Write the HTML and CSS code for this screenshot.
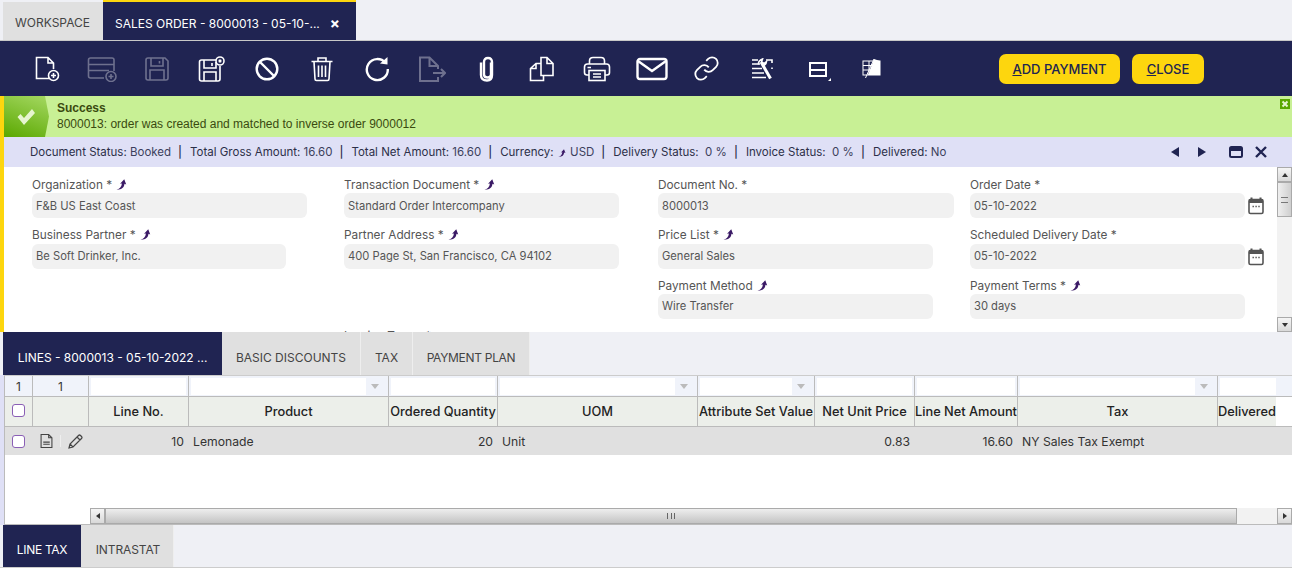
FILE: index.html
```html
<!DOCTYPE html>
<html lang="en">
<head>
<meta charset="utf-8">
<title>Sales Order</title>
<link rel="stylesheet" href="styles.css">
</head>
<body>
<svg class="defs" width="0" height="0" aria-hidden="true">
  <symbol id="jump" viewBox="0 0 10 10"><path d="M.5 9.800C3 9.500 5 7.500 5.400 4.200L3.700 4.400 7.500.2 9.300 5 7.700 4.400C7.500 7.800 5 10 .5 9.800Z" fill="#3b1a66"/></symbol>
  <symbol id="cal" viewBox="0 0 16 18"><path d="M3.500 0.500v3M12.500 0.500v3" stroke="#555" stroke-width="2" fill="none"/><rect x="1" y="2.500" width="14" height="14" rx="1.500" fill="#fff" stroke="#555" stroke-width="1.600"/><rect x="1" y="2.500" width="14" height="3.500" fill="#555"/><path d="M4.500 9.500h1.400M7.400 9.500h1.400M10.300 9.500h1.400" stroke="#555" stroke-width="1.400"/></symbol>
</svg>

<nav class="main-tabs">
  <div class="main-tab">WORKSPACE</div>
  <div class="main-tab active">SALES ORDER - 8000013 - 05-10-...<span class="tab-close">×</span></div>
</nav>

<header class="toolbar">
  <div class="tools">
    <span class="tool"><svg width="26" height="26" viewBox="0 0 26 26" class="ic"><path d="M15 22.500H2.500V1.500H14L19.500 7V13M14 1.500V7H19.500"/><circle cx="19.500" cy="19.500" r="5"/><path d="M19.500 17v5M17 19.500h5"/></svg></span>
    <span class="tool off"><svg width="30" height="26" viewBox="0 0 30 26" class="ic"><path d="M17 22H3.500Q1.500 22 1.500 20V4Q1.500 2 3.500 2H25Q27 2 27 4V15M1.500 8.500H27M1.500 14.500H22"/><circle cx="24" cy="20.500" r="5"/><path d="M24 18v5M21.500 20.500h5"/></svg></span>
    <span class="tool off"><svg width="26" height="26" viewBox="0 0 26 26" class="ic"><path d="M4 2H21L24 5V22Q24 24 22 24H4Q2 24 2 22V4Q2 2 4 2Z"/><path d="M7 2V10H19V2M15.500 5V7.500M6 24V14H20V24"/></svg></span>
    <span class="tool"><svg width="28" height="26" viewBox="0 0 28 26" class="ic"><path d="M18 4H3.500Q1.500 4 1.500 6V23Q1.500 25 3.500 25H20Q22 25 22 23V10"/><path d="M6 4V12H18V6M14 7V10M6 25V16H18V25"/><circle cx="22" cy="5" r="4"/><path d="M20.800 3.800l2.400 2.400M23.200 3.800l-2.400 2.400"/></svg></span>
    <span class="tool"><svg width="24" height="24" viewBox="0 0 24 24" class="ic thick"><circle cx="12" cy="12" r="10.300"/><path d="M5 5L19 19"/></svg></span>
    <span class="tool"><svg width="24" height="26" viewBox="0 0 24 26" class="ic"><path d="M1.500 5.500H22.500M8 5.500V2H16V5.500M4 5.500L5 23Q5 24.500 6.500 24.500H17.500Q19 24.500 19 23L20 5.500M8.500 9.500V21M12 9.500V21M15.500 9.500V21"/></svg></span>
    <span class="tool"><svg width="26" height="26" viewBox="0 0 26 26" class="ic thick"><path d="M21.500 7A10.500 10.500 0 1 0 23.800 13"/><path class="solid" d="M16 7.500L23.500 1V8.500Z"/></svg></span>
    <span class="tool off"><svg width="28" height="26" viewBox="0 0 28 26" class="ic mid"><path d="M20 13V10L11.500 1.500H2V25H20V21M11.500 1.500V10H20M15 17H27M23 13L27 17L23 21"/></svg></span>
    <span class="tool"><svg width="18" height="26" viewBox="0 0 18 26" class="ic thick"><path d="M13 6.500V18.500Q13 21.500 9.500 21.500Q6 21.500 6 18.500V6Q6 2 10 2Q14 2 14 6V19Q14 24.500 9 24.500Q3 24.500 3 19V6.500"/></svg></span>
    <span class="tool"><svg width="26" height="26" viewBox="0 0 26 26" class="ic"><path d="M12 7.500H7L1.500 12.500V24.500H14.500V19M7 7.500V12.500H1.500"/><path d="M12 19.500V1.500H18L24 7.500V19.500ZM18 1.500V7.500H24"/></svg></span>
    <span class="tool"><svg width="28" height="26" viewBox="0 0 28 26" class="ic"><path d="M6.500 8V5Q6.500 1.500 10 1.500H18Q21.500 1.500 21.500 5V8"/><path d="M6 19H4Q1.500 19 1.500 16.500V11Q1.500 8 4.500 8H23.500Q26.500 8 26.500 11V16.500Q26.500 19 24 19H22"/><rect x="6" y="14.500" width="16" height="10"/><path d="M10 18H18M10 21H18M4.500 11.500H8"/></svg></span>
    <span class="tool"><svg width="32" height="24" viewBox="0 0 32 24" class="ic thick"><rect x="1.500" y="2" width="29" height="20" rx="2.500"/><path d="M2 4L16 14L30 4"/></svg></span>
    <span class="tool"><svg width="27" height="27" viewBox="0 0 24 24" class="ic"><path d="M10 13a5 5 0 0 0 7.540.54l3-3a5 5 0 0 0-7.070-7.070l-1.720 1.710"/><path d="M14 11a5 5 0 0 0-7.540-.54l-3 3a5 5 0 0 0 7.070 7.070l1.710-1.710"/></svg></span>
    <span class="tool"><svg width="22" height="22" viewBox="0 0 22 22" class="ic"><path d="M1 2H7M15 2H21V5M1 6H9M1 10.500H11M1 15H13M1 19.500H15M21 9.500V11"/><path class="heavy" d="M10 4L19.500 20.500"/><path d="M7.500 6.500Q7 2.500 11.500 1L10.500 4L13 5.500L15.500 3.500Q15 7.500 11 8"/></svg></span>
    <span class="tool"><span class="layout-ico"><span class="layout-box"><i></i><i></i></span><b></b></span></span>
    <span class="tool"><svg width="20" height="21" viewBox="0 0 20 21" class="ic thin"><rect x="1" y="3" width="17" height="14" fill="none"/><path d="M1 7.500H18M1 12H18M7 3V17"/><path class="solid" d="M12 1L18 3V17H6Z" fill="#ddd"/><path d="M3.500 20L12 1"/></svg></span>
  </div>
  <div class="actions">
    <button class="action wide" type="button"><u>A</u>DD PAYMENT</button>
    <button class="action" type="button"><u>C</u>LOSE</button>
  </div>
</header>

<section class="window">
  <div class="message">
    <div class="msg-icon"><svg width="20" height="18" viewBox="0 0 20 18"><path d="M1.500 9L4.500 6L8 10L16 1L19 5L8 17Z" fill="#e6f5cf"/></svg></div>
    <div class="msg-text"><strong>Success</strong><span>8000013: order was created and matched to inverse order 9000012</span></div>
    <span class="msg-close"><svg width="10" height="10" viewBox="0 0 10 10"><rect width="10" height="10" fill="#5aa800"/><path d="M2.500 2.500L7.500 7.500M7.500 2.500L2.500 7.500" stroke="#e6f5cf" stroke-width="2"/></svg></span>
  </div>

  <div class="status">
    <div class="status-text">
      <span><b>Document Status:</b> Booked</span><em>|</em>
      <span><b>Total Gross Amount:</b> 16.60</span><em>|</em>
      <span><b>Total Net Amount:</b> 16.60</span><em>|</em>
      <span><b>Currency:</b> <svg class="jump" width="8" height="8"><use href="#jump"/></svg> USD</span><em>|</em>
      <span><b>Delivery Status:</b>&nbsp; 0 %</span><em>|</em>
      <span><b>Invoice Status:</b>&nbsp; 0 %</span><em>|</em>
      <span><b>Delivered:</b> No</span>
    </div>
    <div class="status-btns">
      <svg width="10" height="12" viewBox="0 0 10 12"><path d="M9 1V11L1 6Z" fill="#202452"/></svg>
      <svg width="10" height="12" viewBox="0 0 10 12"><path d="M1 1V11L9 6Z" fill="#202452"/></svg>
      <svg class="gap-l" width="14" height="12" viewBox="0 0 14 12"><rect x="1" y="1" width="12" height="10" rx="1.500" fill="none" stroke="#202452" stroke-width="2"/><rect x="1" y="1" width="12" height="4" fill="#202452"/></svg>
      <svg class="gap-s" width="12" height="12" viewBox="0 0 12 12"><path d="M1 1L11 11M11 1L1 11" stroke="#202452" stroke-width="2.400"/></svg>
    </div>
  </div>

  <div class="form-wrap">
    <div class="form">
      <div class="field"><label>Organization * <svg class="jump" width="11" height="11"><use href="#jump"/></svg></label><div class="input w275">F&amp;B US East Coast</div></div>
      <div class="field"><label>Transaction Document * <svg class="jump" width="11" height="11"><use href="#jump"/></svg></label><div class="input w275">Standard Order Intercompany</div></div>
      <div class="field"><label>Document No. *</label><div class="input w296">8000013</div></div>
      <div class="field"><label>Order Date *</label><div class="with-cal"><div class="input w275">05-10-2022</div><svg class="cal" width="16" height="18"><use href="#cal"/></svg></div></div>

      <div class="field second"><label>Business Partner * <svg class="jump" width="11" height="11"><use href="#jump"/></svg></label><div class="input w254">Be Soft Drinker, Inc.</div></div>
      <div class="field second"><label>Partner Address * <svg class="jump" width="11" height="11"><use href="#jump"/></svg></label><div class="input w275">400 Page St, San Francisco, CA 94102</div></div>
      <div class="field second"><label>Price List * <svg class="jump" width="11" height="11"><use href="#jump"/></svg></label><div class="input w275">General Sales</div></div>
      <div class="field second"><label>Scheduled Delivery Date *</label><div class="with-cal"><div class="input w275">05-10-2022</div><svg class="cal" width="16" height="18"><use href="#cal"/></svg></div></div>

      <div class="field"></div>
      <div class="field"></div>
      <div class="field third"><label>Payment Method <svg class="jump" width="11" height="11"><use href="#jump"/></svg></label><div class="input w275">Wire Transfer</div></div>
      <div class="field third"><label>Payment Terms * <svg class="jump" width="11" height="11"><use href="#jump"/></svg></label><div class="input w275">30 days</div></div>

      <div class="field"></div>
      <div class="field"><label>Invoice Terms *</label></div>
    </div>
    <div class="vscroll">
      <span class="sb-btn"><i class="up"></i></span>
      <span class="sb-thumb"><i></i></span>
      <span class="sb-track"></span>
      <span class="sb-btn"><i class="down"></i></span>
    </div>
  </div>
</section>

<nav class="sub-tabs">
  <div class="sub-tab active t219">LINES - 8000013 - 05-10-2022 ...</div>
  <div class="sub-tab t139">BASIC DISCOUNTS</div>
  <div class="sub-tab t52">TAX</div>
  <div class="sub-tab t117">PAYMENT PLAN</div>
</nav>

<section class="grid-outer">
  <div class="grid">
    <div class="row filter">
      <div class="cell num">1</div>
      <div class="cell num">1</div>
      <div class="cell"><span class="box"></span></div>
      <div class="cell"><span class="box"></span><span class="drop"></span></div>
      <div class="cell"><span class="box"></span></div>
      <div class="cell"><span class="box"></span><span class="drop"></span></div>
      <div class="cell"><span class="box"></span><span class="drop"></span></div>
      <div class="cell"><span class="box"></span></div>
      <div class="cell"><span class="box"></span></div>
      <div class="cell"><span class="box"></span><span class="drop"></span></div>
      <div class="cell last"><span class="box"></span></div>
    </div>
    <div class="row head">
      <div class="cell"><span class="check"></span></div>
      <div class="cell"></div>
      <div class="cell">Line No.</div>
      <div class="cell">Product</div>
      <div class="cell">Ordered Quantity</div>
      <div class="cell">UOM</div>
      <div class="cell">Attribute Set Value</div>
      <div class="cell">Net Unit Price</div>
      <div class="cell">Line Net Amount</div>
      <div class="cell">Tax</div>
      <div class="cell last">Delivered</div>
    </div>
    <div class="row data">
      <div class="cell"><span class="check"></span></div>
      <div class="cell icons">
        <svg width="13" height="16" viewBox="0 0 12 14"><path d="M1 1H8L11 4V13H1Z M8 1V4H11" fill="none" stroke="#444" stroke-width="1"/><path d="M3 8H9M3 10H9" stroke="#444" stroke-width="1"/></svg>
        <i class="sep"></i>
        <svg width="15" height="15" viewBox="0 0 15 15"><path d="M1 14L2 10L10.500 1.500Q11.500 .5 12.500 1.500L13.500 2.500Q14.500 3.500 13.500 4.500L5 13ZM9 3L12 6M2 10L5 13" fill="none" stroke="#444" stroke-width="1.200"/></svg>
      </div>
      <div class="cell right">10</div>
      <div class="cell">Lemonade</div>
      <div class="cell right">20</div>
      <div class="cell">Unit</div>
      <div class="cell"></div>
      <div class="cell right">0.83</div>
      <div class="cell right">16.60</div>
      <div class="cell">NY Sales Tax Exempt</div>
      <div class="cell last"></div>
    </div>
    <div class="grid-space"></div>
    <div class="hscroll">
      <span class="sb-btn h"><i class="left"></i></span>
      <span class="h-thumb"><i></i></span>
      <span class="h-track"></span>
      <span class="sb-btn h"><i class="right"></i></span>
    </div>
  </div>
</section>

<nav class="sub-tabs bottom">
  <div class="sub-tab active t78">LINE TAX</div>
  <div class="sub-tab t93">INTRASTAT</div>
</nav>
</body>
</html>
```

FILE: styles.css
```css
* { box-sizing: border-box; }
html, body { height: 100%; }
body {
  margin: 0;
  width: 1292px;
  height: 568px;
  overflow: hidden;
  background: #eff0f5;
  color: #444;
  font-family: Inter, "Liberation Sans", sans-serif;
  font-size: 11px;
}
.defs { display: block; height: 0; }

/* main tabs */
.main-tabs {
  display: flex;
  height: 41px;
  padding-left: 3px;
  border-bottom: 1px solid #c8c8c8;
}
.main-tab {
  display: flex;
  align-items: center;
  width: 100px;
  margin-top: 2px;
  padding: 3px 0 0 12px;
  background: #e0e0e0;
  color: #444;
  font-size: 12px;
  white-space: nowrap;
}
.main-tab.active {
  width: 253px;
  height: 40px;
  margin-top: 0;
  padding-top: 4px;
  border-top: 2px solid #fdd60e;
  background: #202452;
  color: #fff;
}
.tab-close { margin-left: 10px; font-size: 15px; font-weight: 700; }

/* toolbar */
.toolbar {
  display: flex;
  align-items: center;
  height: 55px;
  background: #202452;
  padding-left: 19px;
}
.tools { display: flex; width: 980px; }
.tool {
  display: flex;
  align-items: center;
  justify-content: center;
  width: 55px;
  height: 32px;
}
.tool.off { opacity: .35; }
.ic { fill: none; stroke: #fff; stroke-width: 1.6; }
.ic.thick { stroke-width: 2.4; }
.ic.mid { stroke-width: 2; }
.ic.thin { stroke-width: 1; }
.ic .solid { fill: #fff; stroke: none; }
.ic .heavy { stroke-width: 3; }
.layout-ico { position: relative; display: block; width: 20px; height: 19px; }
.layout-box {
  display: flex;
  flex-direction: column;
  gap: 2px;
  width: 18px;
  height: 15px;
  margin: 3px 0 0 2px;
  border: 2px solid #fff;
  background: #fff;
}
.layout-box i { flex: 1; background: #202452; }
.layout-ico b {
  position: absolute;
  right: -4px;
  bottom: -3px;
  border-left: 3px solid transparent;
  border-bottom: 3px solid #fff;
}
.actions { display: flex; gap: 12px; }
.action {
  width: 72px;
  height: 30px;
  padding: 0;
  border: 0;
  border-radius: 7px;
  background: #fdd60e;
  color: #202452;
  font: 500 13px Inter, "Liberation Sans", sans-serif;
}
.action.wide { width: 121px; }

/* window */
.window { border-left: 4px solid #fdd60e; }
.message {
  display: flex;
  height: 41px;
  background: #c8f095;
  position: relative;
}
.msg-icon {
  display: flex;
  align-items: center;
  justify-content: center;
  width: 45px;
  padding-right: 2px;
  background: linear-gradient(200deg, #a5d862, #5aa800);
  clip-path: polygon(0 0, 41px 0, 45px 50%, 41px 100%, 0 100%);
}
.msg-text {
  display: flex;
  flex-direction: column;
  gap: 3px;
  padding: 6px 0 0 8px;
  color: #3a4a10;
  font-family: "Liberation Sans", sans-serif;
  font-size: 12px;
  line-height: 13px;
}
.msg-close { position: absolute; top: 3px; right: 2px; display: flex; }
.status {
  display: flex;
  align-items: center;
  justify-content: space-between;
  height: 30px;
  padding: 0 25px 0 26px;
  background: #dfe0f6;
  color: #3c3f5c;
  font-size: 11.500px;
}
.status-text { display: flex; align-items: center; white-space: nowrap; }
.status-text b { font-weight: 400; color: #2c2f48; }
.status-text em { padding: 0 8px 0 7px; font-style: normal; font-weight: 500; color: #2c2f48; }
.status-btns { display: flex; align-items: center; gap: 17px; }
.status-btns .gap-l { margin-left: 5px; }
.status-btns .gap-s { margin-left: -5px; }
.jump { margin: 0 1px; vertical-align: -1px; }

/* form */
.form-wrap { display: flex; height: 165px; background: #fff; overflow: hidden; }
.form {
  flex: 1;
  display: grid;
  grid-template-columns: 312px 314px 312px 1fr;
  grid-template-rows: 50px 51px 50px 50px;
  padding: 10px 0 0 28px;
}
.field { display: flex; flex-direction: column; }
.field label { height: 16px; line-height: 16px; font-size: 11.800px; color: #555; white-space: nowrap; }
.input {
  display: flex;
  align-items: center;
  height: 25px;
  padding-left: 4px;
  border-radius: 6px;
  background: #f1f1f1;
  color: #555;
  font-size: 11.200px;
  white-space: nowrap;
}
.second .input, .third .input { padding-bottom: 1px; }
.second .input, .second .with-cal .cal { margin-top: 1px; }
.w254 { width: 254px; }
.w275 { width: 275px; }
.w296 { width: 296px; }
.with-cal { display: flex; align-items: center; gap: 2px; }
.with-cal .cal { margin-left: 1px; }

/* scrollbars */
.vscroll {
  display: flex;
  flex-direction: column;
  width: 15px;
  background: #f2f2f2;
}
.sb-btn {
  display: flex;
  align-items: center;
  justify-content: center;
  width: 15px;
  height: 15px;
  border: 1px solid #aaa;
  background: linear-gradient(#f5f5f5, #d9d9d9);
}
.sb-btn i { display: block; width: 0; height: 0; border: 3px solid transparent; }
.sb-btn i.up { border-bottom: 4px solid #333; border-top: 0; }
.sb-btn i.down { border-top: 4px solid #333; border-bottom: 0; }
.sb-btn i.left { border-right: 4px solid #333; border-left: 0; }
.sb-btn i.right { border-left: 4px solid #333; border-right: 0; }
.sb-thumb {
  display: flex;
  align-items: center;
  justify-content: center;
  height: 35px;
  border: 1px solid #aaa;
  background: linear-gradient(90deg, #efefef, #cfcfcf);
}
.sb-thumb i { width: 7px; height: 6px; border-top: 1px solid #777; border-bottom: 1px solid #777; }
.sb-track { flex: 1; }

/* sub tabs */
.sub-tabs { display: flex; height: 43px; padding-left: 3px; }
.sub-tab {
  display: flex;
  align-items: center;
  justify-content: center;
  padding-top: 7px;
  background: #e0e0e0;
  border-right: 1px solid #eeeeee;
  color: #444;
  font-size: 12px;
  white-space: nowrap;
}
.sub-tab.active { background: #202452; color: #fff; border: 0; }
.t219 { width: 219px; }
.t139 { width: 139px; }
.t52 { width: 52px; }
.t117 { width: 117px; letter-spacing: -.3px; }
.t78 { width: 78px; letter-spacing: -.3px; }
.t93 { width: 93px; padding-left: 2px; letter-spacing: -.1px; }
.sub-tabs.bottom { height: 43px; border-bottom: 1px solid #ccc; }

/* grid */
.grid-outer { height: 150px; border-left: 4px solid #dfe0f6; }
.grid {
  display: flex;
  flex-direction: column;
  height: 150px;
  background: #fff;
  border-left: 1px solid #bbb;
  border-bottom: 1px solid #bbb;
  border-top: 1px solid #ccc;
}
.row {
  display: grid;
  grid-template-columns: 28px 56px 100px 200px 109px 200px 117px 100px 103px 200px 58px;
}
.cell {
  display: flex;
  align-items: center;
  min-width: 0;
  border-right: 1px solid #bbb;
  color: #333;
  white-space: nowrap;
  overflow: hidden;
}
.filter { height: 21px; border-bottom: 1px solid #bbb; background: #f0f3fa; padding-right: 17px; }
.filter .cell { padding: 2px; gap: 0; }
.filter .cell.last { border-right: 0; padding-right: 0; }
.filter .num { justify-content: center; font-size: 12px; color: #333; }
.box { flex: 1; height: 17px; background: #fff; }
.drop {
  flex: none;
  width: 20px;
  height: 100%;
  position: relative;
}
.drop::after {
  content: "";
  position: absolute;
  left: 5px;
  top: 6px;
  border: 4px solid transparent;
  border-top: 5px solid #bbb;
  border-bottom: 0;
}
.head { height: 30px; border-bottom: 1px solid #bbb; padding-right: 17px; }
.head .cell { justify-content: center; background: #ecefea; color: #222; font-size: 12.800px; font-weight: 500; }
.head .cell.last { border-right: 0; }
.data { height: 28px; background: #e0e0e0; }
.data .cell { border: 0; padding: 0 5px 0 4px; font-size: 12.200px; }
.data .right { justify-content: flex-end; }
.data .cell.icons { gap: 7px; padding-left: 7px; }
.sep { width: 1px; height: 12px; background: #eee; }
.check {
  display: block;
  width: 13px;
  height: 13px;
  margin-left: 3px;
  border: 1px solid #8a5fb5;
  border-radius: 3px;
  background: #fff;
}
.head .cell .check { margin: 0 1px 3px 0; }
.data .cell:first-child { padding: 0 0 0 4px; }
.grid-space { flex: 1; }
.hscroll { display: flex; height: 16px; margin-left: 85px; background: #f2f2f2; }
.sb-btn.h { height: 16px; }
.h-thumb {
  flex: 1;
  display: flex;
  align-items: center;
  justify-content: center;
  border: 1px solid #aaa;
  background: linear-gradient(#eee, #c4c4c4);
}
.h-track { width: 40px; }
.h-thumb i { width: 8px; height: 6px; border-left: 1px solid #666; border-right: 1px solid #666; background: linear-gradient(90deg, transparent 3px, #666 3px, #666 4px, transparent 4px); }
```
